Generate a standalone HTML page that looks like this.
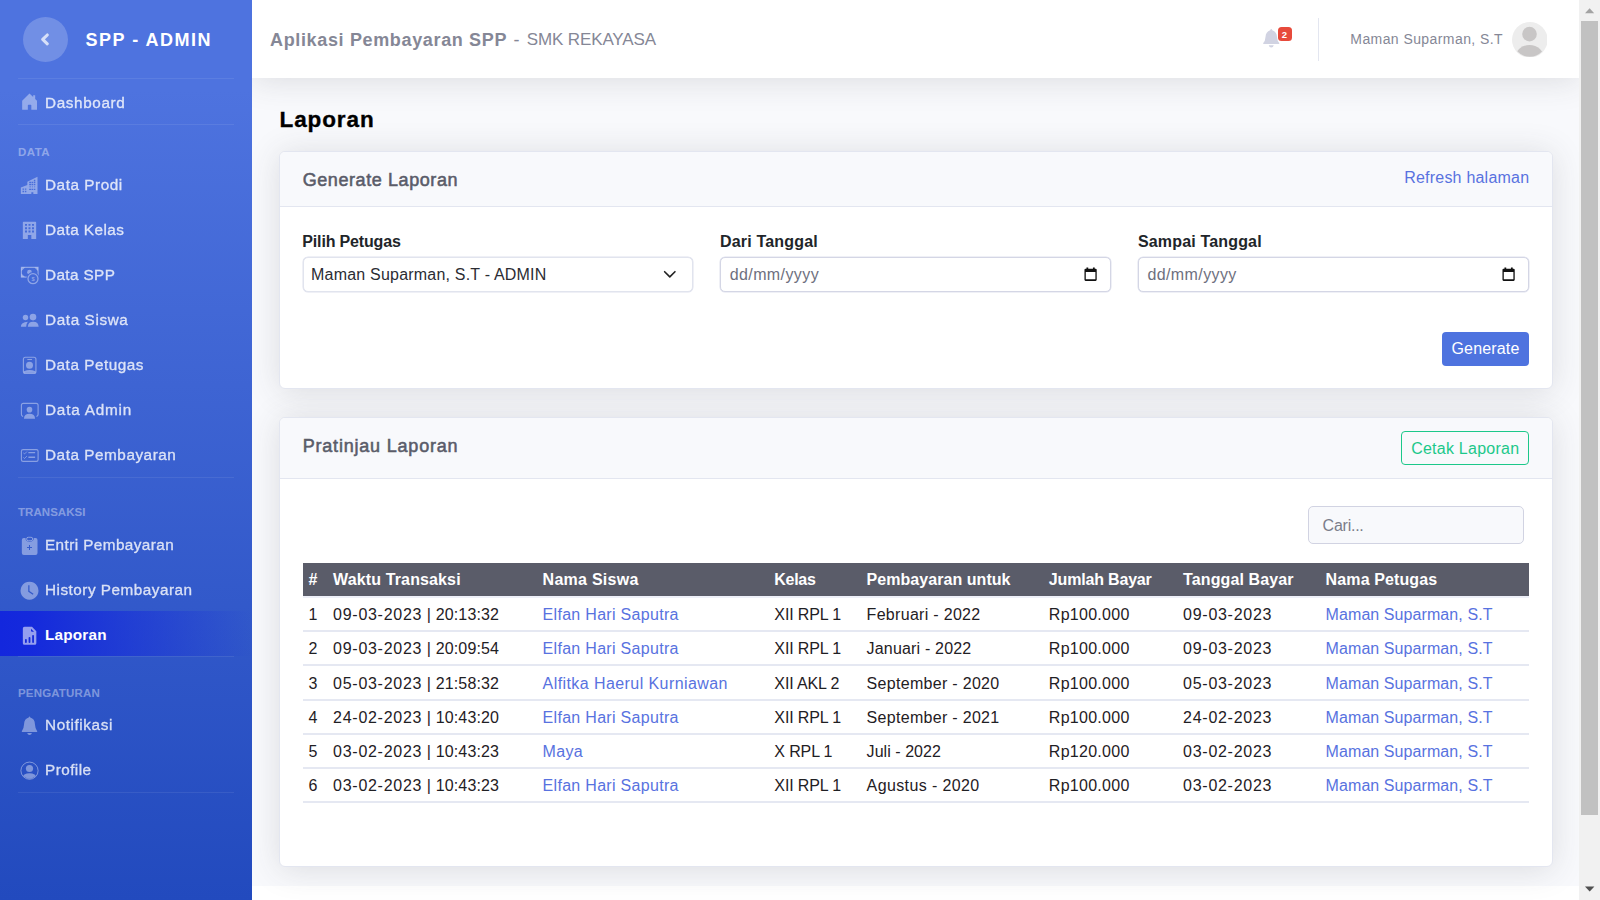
<!DOCTYPE html>
<html lang="id">
<head>
<meta charset="utf-8">
<title>Laporan - Aplikasi Pembayaran SPP</title>
<style>
*{box-sizing:border-box}
html,body{margin:0;padding:0}
body{width:1600px;height:900px;overflow:hidden;position:relative;background:#f8f9fc;
  font-family:"Liberation Sans",sans-serif;font-size:16px;color:#212529;-webkit-font-smoothing:antialiased}
a{text-decoration:none;color:#5872e0}
ul{list-style:none;margin:0;padding:0}

/* ---------- sidebar ---------- */
#sidebar{position:absolute;left:0;top:0;width:252px;height:900px;
  background:linear-gradient(180deg,#4e73df 10%,#224abe 100%)}
.brand{position:absolute;left:0;top:0;width:252px;height:78px}
.brand .circle{position:absolute;left:23px;top:16.7px;width:45px;height:45px;border-radius:50%;background:rgba(255,255,255,.2)}
.brand .circle svg{position:absolute;left:15px;top:15px;width:15px;height:15px}
.brand .name{position:absolute;left:85.5px;top:29px;line-height:22px;font-size:18px;font-weight:700;color:#fff;letter-spacing:1.5px;white-space:nowrap}
.sdiv{position:absolute;left:18px;width:216px;height:1px;background:rgba(255,255,255,.08)}
.shead{position:absolute;left:18px;font-size:11.5px;font-weight:700;color:rgba(255,255,255,.4);line-height:14px;white-space:nowrap;letter-spacing:.05px}
.nav{position:absolute;left:0;width:252px;height:45px}
.nav svg{position:absolute;left:14px;top:7.5px;width:40px;height:30px;fill:rgba(255,255,255,.4)}
.nav span{position:absolute;left:45px;top:12px;line-height:20px;font-size:15.3px;color:#fff;opacity:.82;-webkit-text-stroke:.3px #fff;white-space:nowrap;letter-spacing:.45px}
.nav.active::before{content:"";position:absolute;left:0;top:-1.5px;width:252px;height:45px;background:linear-gradient(90deg,#1327dd 0%,rgba(19,39,221,.95) 12%,rgba(19,39,221,0) 100%)}
.nav.active svg{fill:rgba(255,255,255,.55)}
.nav.active span{color:#fff;opacity:1;-webkit-text-stroke:0;font-weight:700;letter-spacing:.1px}

/* ---------- topbar ---------- */
#topbar{position:absolute;left:252px;top:0;width:1327px;height:78.3px;background:#fff;
  box-shadow:0 2.7px 31.5px 0 rgba(58,59,69,.15)}
#topbar .title{position:absolute;left:18px;top:27.8px;line-height:24px;font-size:18px;color:#858796;white-space:nowrap}
#topbar .title b{font-weight:700;letter-spacing:.65px}
#topbar .title .dash{position:absolute;left:243.5px;top:0;font-weight:400;letter-spacing:0}
#topbar .title .sub{position:absolute;left:256.8px;top:0;font-size:17px;letter-spacing:-.13px}
#topbar .vdiv{position:absolute;left:1066px;top:18px;width:1px;height:42.75px;background:#e3e6f0}
#topbar .user{position:absolute;left:1098.3px;top:29.2px;line-height:20px;font-size:14px;color:#858796;white-space:nowrap;letter-spacing:.42px}
#topbar .avatar{position:absolute;left:1259.8px;top:21.8px;width:35.6px;height:35.6px}
#topbar .bell{position:absolute;left:1009px;top:27px;width:20px;height:22px}
#topbar .badge{position:absolute;left:1025.5px;top:26.5px;width:14px;height:14px;border-radius:3.5px;background:#e74a3b;color:#fff;font-size:9.5px;font-weight:700;line-height:15px;text-align:center}

/* ---------- scrollbar ---------- */
#sb{position:absolute;left:1579px;top:0;width:21px;height:900px;background:#f1f1f1}
#sb .thumb{position:absolute;left:2px;top:21px;width:17px;height:794px;background:#c1c1c1}
#sb svg{position:absolute;left:0;width:21px;height:21px}

/* ---------- content ---------- */
#content{position:absolute;left:252px;top:78.75px;width:1327px;height:821.25px;overflow:hidden}
h1.page{position:absolute;left:279.5px;top:103.7px;-webkit-text-stroke:.35px #000;margin:0;line-height:32px;font-size:22.5px;font-weight:700;color:#000;white-space:nowrap;letter-spacing:.9px}
.card{position:absolute;left:279px;width:1274px;background:#fff;border:1px solid #e3e6f0;border-radius:6px;
  box-shadow:0 2.7px 31.5px 0 rgba(58,59,69,.15)}
.card .hd{position:absolute;left:0;top:0;right:0;background:#f8f9fc;border-bottom:1px solid #e3e6f0;border-radius:5px 5px 0 0}
.card .hd h6{position:absolute;left:22.7px;margin:0;font-size:18px;font-weight:400;color:#5a5c69;-webkit-text-stroke:.55px #5a5c69;line-height:27px;white-space:nowrap}

.hlink{position:absolute;right:22.7px;top:16px;line-height:20px;font-size:16px;color:#5872e0;white-space:nowrap;letter-spacing:.22px}
.lbl{position:absolute;top:80px;line-height:20px;font-size:16px;font-weight:700;color:#212529;white-space:nowrap}
.inp{position:absolute;top:104.5px;width:390.7px;height:35px;border:1px solid #d4d6e5;border-radius:5px;background:#fff;box-shadow:0 0 0 .5px #dfe1ee}
.inp .val,.inp .ph{position:absolute;left:7.4px;top:7.3px;line-height:20px;font-size:16px;white-space:nowrap}
.inp .val{color:#2b2c33;letter-spacing:.2px}
.inp .ph{color:#6e707e;letter-spacing:.4px;left:8.4px}
.inp .chev{position:absolute;left:358.4px;top:12.7px;width:15.6px;height:8.6px}
.inp .cal{position:absolute;left:362.6px;top:9.5px;width:13.2px;height:14.2px}
.btn-primary{position:absolute;left:1162px;top:179.75px;width:87px;height:34.2px;border-radius:4px;background:#4e73df;color:#fff;font-size:16px;line-height:34px;text-align:center;white-space:nowrap;letter-spacing:.16px}
.btn-outline{position:absolute;left:1121.4px;top:12.6px;width:127.7px;height:34.2px;border:1.2px solid #1cc88a;border-radius:4px;color:#1cc88a;font-size:16px;line-height:34.2px;text-align:center;white-space:nowrap;background:transparent;letter-spacing:.24px}
.search{position:absolute;left:1028.2px;top:88.2px;width:215.7px;height:37.6px;border:1px solid #d1d3e2;border-radius:5px;background:#f8f9fc}
.search span{position:absolute;left:13.4px;top:8.4px;line-height:20px;font-size:16px;color:#7b7d8a;white-space:nowrap;letter-spacing:-.24px}
.tbl{position:absolute;left:22.6px;top:145.2px;width:1226.4px;border-collapse:separate;border-spacing:0;table-layout:fixed;font-size:16px}
.tbl th{height:34.6px;padding:1.6px 0 0 6px;border-bottom:2px solid #eef0f8;background:#5a5c69;background-clip:padding-box;color:#fff;font-weight:700;text-align:left;white-space:nowrap;line-height:20px}
.tbl td{height:34.27px;padding:1.5px 0 0 6px;border-bottom:2px solid #e5e8f2;color:#1f2024;white-space:nowrap;line-height:20px}
.tbl a{color:#5872e0}
.tbl tr:nth-child(3) td,.tbl tr:nth-child(4) td{padding-top:2.6px}
.tbl td.d{letter-spacing:.72px}
.tbl td.d i{font-style:normal;letter-spacing:.15px}
.tbl td.n{letter-spacing:.3px}
.tbl td.k{letter-spacing:-.14px}
.tbl td.p{letter-spacing:.3px}
.tbl td.j{letter-spacing:.27px}
.tbl td.o{letter-spacing:.08px}
#footer{position:absolute;left:252px;top:886px;width:1327px;height:20px;background:#fff}
</style>
</head>
<body>

<div id="content"></div>
<div id="footer"></div>

<h1 class="page">Laporan</h1>

<section class="card" id="card1" style="top:151px;height:238px">
  <div class="hd" style="height:55px">
    <h6 style="top:14.5px;letter-spacing:.58px">Generate Laporan</h6>
    <a class="hlink" href="#">Refresh halaman</a>
  </div>
  <label class="lbl" style="left:22.3px;letter-spacing:-.16px">Pilih Petugas</label>
  <label class="lbl" style="left:439.9px;letter-spacing:.19px">Dari Tanggal</label>
  <label class="lbl" style="left:857.9px;letter-spacing:.17px">Sampai Tanggal</label>
  <div class="inp" style="left:22.7px;border-color:#e1e4ee"><span class="val">Maman Suparman, S.T - ADMIN</span>
    <svg class="chev" viewBox="0 0 16 10"><path d="M2 2 L8 8 L14 2" fill="none" stroke="#222" stroke-width="1.9" stroke-linecap="round" stroke-linejoin="round"/></svg></div>
  <div class="inp" style="left:440.3px"><span class="ph">dd/mm/yyyy</span>
    <svg class="cal" viewBox="0 0 14 15"><path fill-rule="evenodd" fill="#111" d="M2.6 0.4 h1.9 v1.4 h5 v-1.4 h1.9 v1.4 h0.9 q1.2 0 1.2 1.2 v10.6 q0 1.2 -1.2 1.2 h-10.6 q-1.2 0 -1.2 -1.2 v-10.6 q0 -1.2 1.2 -1.2 h0.9 z M1.9 5.2 v7.9 h10.2 v-7.9 z"/></svg></div>
  <div class="inp" style="left:858px"><span class="ph">dd/mm/yyyy</span>
    <svg class="cal" viewBox="0 0 14 15"><path fill-rule="evenodd" fill="#111" d="M2.6 0.4 h1.9 v1.4 h5 v-1.4 h1.9 v1.4 h0.9 q1.2 0 1.2 1.2 v10.6 q0 1.2 -1.2 1.2 h-10.6 q-1.2 0 -1.2 -1.2 v-10.6 q0 -1.2 1.2 -1.2 h0.9 z M1.9 5.2 v7.9 h10.2 v-7.9 z"/></svg></div>
  <a class="btn-primary" href="#">Generate</a>
</section>

<section class="card" id="card2" style="top:417px;height:450px">
  <div class="hd" style="height:61px">
    <h6 style="top:15px;letter-spacing:.8px">Pratinjau Laporan</h6>
    <a class="btn-outline" href="#">Cetak Laporan</a>
  </div>
  <div class="search"><span>Cari...</span></div>
  <table class="tbl">
    <colgroup><col style="width:24.5px"><col style="width:209.5px"><col style="width:231.75px"><col style="width:92.25px"><col style="width:182.25px"><col style="width:134.25px"><col style="width:142.5px"><col style="width:209.5px"></colgroup>
    <thead><tr><th>#</th><th style="letter-spacing:0.13px">Waktu Transaksi</th><th style="letter-spacing:0.26px">Nama Siswa</th><th style="letter-spacing:-0.3px">Kelas</th><th style="letter-spacing:0.05px">Pembayaran untuk</th><th style="letter-spacing:-0.18px">Jumlah Bayar</th><th style="letter-spacing:0.1px">Tanggal Bayar</th><th style="letter-spacing:0.12px">Nama Petugas</th></tr></thead>
    <tbody>
      <tr><td>1</td><td class="d">09-03-2023<i> | 20:13:32</i></td><td class="n"><a href="#">Elfan Hari Saputra</a></td><td class="k">XII RPL 1</td><td class="p">Februari - 2022</td><td class="j">Rp100.000</td><td class="d">09-03-2023</td><td class="o"><a href="#">Maman Suparman, S.T</a></td></tr>
      <tr><td>2</td><td class="d">09-03-2023<i> | 20:09:54</i></td><td class="n"><a href="#">Elfan Hari Saputra</a></td><td class="k">XII RPL 1</td><td class="p" style="letter-spacing:.18px">Januari - 2022</td><td class="j">Rp100.000</td><td class="d">09-03-2023</td><td class="o"><a href="#">Maman Suparman, S.T</a></td></tr>
      <tr><td>3</td><td class="d">05-03-2023<i> | 21:58:32</i></td><td class="n"><a href="#" style="letter-spacing:.42px">Alfitka Haerul Kurniawan</a></td><td class="k">XII AKL 2</td><td class="p">September - 2020</td><td class="j">Rp100.000</td><td class="d">05-03-2023</td><td class="o"><a href="#">Maman Suparman, S.T</a></td></tr>
      <tr><td>4</td><td class="d">24-02-2023<i> | 10:43:20</i></td><td class="n"><a href="#">Elfan Hari Saputra</a></td><td class="k">XII RPL 1</td><td class="p">September - 2021</td><td class="j">Rp100.000</td><td class="d">24-02-2023</td><td class="o"><a href="#">Maman Suparman, S.T</a></td></tr>
      <tr><td>5</td><td class="d">03-02-2023<i> | 10:43:23</i></td><td class="n"><a href="#">Maya</a></td><td class="k">X RPL 1</td><td class="p" style="letter-spacing:.05px">Juli - 2022</td><td class="j">Rp120.000</td><td class="d">03-02-2023</td><td class="o"><a href="#">Maman Suparman, S.T</a></td></tr>
      <tr><td>6</td><td class="d">03-02-2023<i> | 10:43:23</i></td><td class="n"><a href="#">Elfan Hari Saputra</a></td><td class="k">XII RPL 1</td><td class="p" style="letter-spacing:.38px">Agustus - 2020</td><td class="j">Rp100.000</td><td class="d">03-02-2023</td><td class="o"><a href="#">Maman Suparman, S.T</a></td></tr>
    </tbody>
  </table>
</section>



<header id="topbar">
  <div class="title"><b>Aplikasi Pembayaran SPP</b><span class="dash">-</span><span class="sub">SMK REKAYASA</span></div>
  <svg class="bell" viewBox="0 0 1200 900" style="left:998px;top:15px;width:60px;height:45px"><path fill="#d1d3e2" d="M425 280 Q440 280 446 305 Q535 335 540 440 Q545 520 585 560 V580 H265 V560 Q305 520 310 440 Q315 335 404 305 Q410 280 425 280 Z M375 605 H475 Q465 650 425 650 Q385 650 375 605 Z"/></svg>
  <div class="badge">2</div>
  <div class="vdiv"></div>
  <div class="user">Maman Suparman, S.T</div>
  <svg class="avatar" viewBox="0 0 36 36"><defs><clipPath id="cpa"><circle cx="18" cy="18" r="17.2"/></clipPath></defs><circle cx="18" cy="18" r="18" fill="#ededed"/><circle cx="17.7" cy="12.2" r="7.4" fill="#c8c6c6"/><ellipse cx="17.7" cy="37.2" rx="15" ry="14" fill="#c8c6c6" clip-path="url(#cpa)"/></svg>
</header>

<nav id="sidebar">
  <div class="brand">
    <div class="circle"><svg viewBox="0 0 15 15"><path d="M9.3 3 L4.7 7.4 L9.3 11.8" fill="none" stroke="rgba(255,255,255,.72)" stroke-width="3.1" stroke-linecap="round" stroke-linejoin="round"/></svg></div>
    <div class="name">SPP - ADMIN</div>
  </div>
  <div class="sdiv" style="top:78px"></div>

  <a class="nav" style="top:80.5px" href="#"><svg viewBox="0 0 1200 900"><path d="M465 165 L245 385 V655 H415 V525 Q415 505 435 505 H500 Q520 505 520 525 V655 H690 V385 L635 330 V215 H575 V272 Z"/></svg><span style="letter-spacing:0.62px">Dashboard</span></a>
  <div class="sdiv" style="top:124px"></div>

  <div class="shead" style="top:145px;letter-spacing:.45px">DATA</div>
  <a class="nav" style="top:162.5px" href="#"><svg viewBox="0 0 1200 900"><path fill-rule="evenodd" d="M205 720 V525 L400 450 V350 L705 205 V720 H580 V665 H520 V720 Z M455 355 h60 v40 h-60z M530 355 h45 v40 h-45z M595 355 h45 v40 h-45z M595 295 h45 v40 h-45z M455 420 h60 v40 h-60z M530 420 h45 v40 h-45z M595 420 h45 v40 h-45z M460 492 h50 v22 h-50z M535 492 h36 v22 h-36z M600 492 h36 v22 h-36z M455 560 h60 v40 h-60z M530 560 h45 v40 h-45z M595 560 h45 v40 h-45z M255 555 h45 v40 h-45z M325 555 h45 v40 h-45z M255 625 h45 v40 h-45z M325 625 h45 v40 h-45z"/></svg><span style="letter-spacing:0.54px">Data Prodi</span></a>
  <a class="nav" style="top:207.5px" href="#"><svg viewBox="0 0 1200 900"><path fill-rule="evenodd" d="M285 205 H645 Q665 205 665 225 V720 H520 V600 H415 V720 H265 V225 Q265 205 285 205 Z M330 268 h60 v58 h-60z M435 268 h60 v58 h-60z M540 268 h60 v58 h-60z M330 366 h60 v58 h-60z M435 366 h60 v58 h-60z M540 366 h60 v58 h-60z M330 464 h60 v58 h-60z M435 464 h60 v58 h-60z M540 464 h60 v58 h-60z"/></svg><span>Data Kelas</span></a>
  <a class="nav" style="top:252.5px" href="#"><svg viewBox="0 0 1200 900"><defs><mask id="mk1"><rect width="1200" height="900" fill="#fff"/><circle cx="570" cy="560" r="200" fill="#000"/></mask></defs><g mask="url(#mk1)"><path fill-rule="evenodd" d="M205 205 H740 V530 H205 Z M240 240 V495 H705 V240 Z"/><path d="M225 225 H330 L225 330 Z M720 225 H615 L720 330 Z M225 510 H330 L225 405 Z"/><circle cx="465" cy="365" r="70"/></g><circle cx="570" cy="560" r="150" fill="none" stroke="rgba(255,255,255,.4)" stroke-width="38"/><text x="570" y="625" text-anchor="middle" font-family="Liberation Sans, sans-serif" font-weight="700" font-size="170">$</text></svg><span style="letter-spacing:0.39px">Data SPP</span></a>
  <a class="nav" style="top:297.5px" href="#"><svg viewBox="0 0 1200 900"><circle cx="345" cy="378" r="82"/><circle cx="570" cy="362" r="100"/><path d="M205 655 Q205 510 415 503 Q368 560 365 655 Z"/><path d="M415 655 Q418 500 577 500 Q736 500 740 655 Z"/></svg><span style="letter-spacing:0.61px">Data Siswa</span></a>
  <a class="nav" style="top:342.5px" href="#"><svg viewBox="0 0 1200 900"><rect x="282" y="218" width="376" height="485" rx="60" fill="none" stroke="rgba(255,255,255,.4)" stroke-width="34"/><rect x="395" y="272" width="150" height="26" rx="13"/><circle cx="465" cy="460" r="105"/><path d="M299 640 Q465 560 641 640 V686 H299 Z"/></svg><span style="letter-spacing:0.53px">Data Petugas</span></a>
  <a class="nav" style="top:387.5px" href="#"><svg viewBox="0 0 1200 900"><path d="M258 640 Q222 620 222 575 V310 Q222 252 280 252 H665 Q723 252 723 310 V575 Q723 620 687 640" fill="none" stroke="rgba(255,255,255,.4)" stroke-width="34" stroke-linecap="round"/><circle cx="465" cy="440" r="84"/><path d="M298 715 Q302 565 465 565 Q628 565 632 715 Z"/></svg><span style="letter-spacing:0.79px">Data Admin</span></a>
  <a class="nav" style="top:432.5px" href="#"><svg viewBox="0 0 1200 900"><rect x="222" y="290" width="501" height="350" rx="50" fill="none" stroke="rgba(255,255,255,.4)" stroke-width="34"/><path d="M290 395 L318 418 L380 355 M290 530 L318 553 L380 490" fill="none" stroke="rgba(255,255,255,.4)" stroke-width="26" stroke-linecap="round" stroke-linejoin="round"/><rect x="430" y="360" width="205" height="38" rx="10"/><rect x="430" y="492" width="205" height="46" rx="10"/></svg><span style="letter-spacing:0.54px">Data Pembayaran</span></a>
  <div class="sdiv" style="top:476.6px"></div>

  <div class="shead" style="top:505px">TRANSAKSI</div>
  <a class="nav" style="top:522.5px" href="#"><svg viewBox="0 0 1200 900"><path fill-rule="evenodd" d="M295 240 H345 Q345 355 470 355 Q595 355 595 240 H645 Q705 240 705 300 V690 Q705 750 645 750 H295 Q235 750 235 690 V300 Q235 240 295 240 Z M450 450 h30 v60 h60 v30 h-60 v60 h-30 v-60 h-60 v-30 h60 z"/><rect x="378" y="218" width="184" height="104" rx="52" fill="none" stroke="rgba(255,255,255,.4)" stroke-width="30"/></svg><span style="letter-spacing:0.42px">Entri Pembayaran</span></a>
  <a class="nav" style="top:567.5px" href="#"><svg viewBox="0 0 1200 900"><path fill-rule="evenodd" d="M465 200 A270 270 0 1 1 464.9 200 Z M427 305 H465 V482 L585 560 L564 592 L427 503 Z"/></svg><span style="letter-spacing:0.5px">History Pembayaran</span></a>
  <a class="nav active" style="top:612.5px" href="#"><svg viewBox="0 0 1200 900"><path fill-rule="evenodd" d="M315 205 H540 L670 340 V695 Q670 745 620 745 H315 Q265 745 265 695 V255 Q265 205 315 205 Z M510 262 V320 Q510 352 545 352 H600 Z M330 595 q0 -22 27 -22 q27 0 27 22 v70 q0 22 -27 22 q-27 0 -27 -22z M438 535 q0 -22 27 -22 q27 0 27 22 v130 q0 22 -27 22 q-27 0 -27 -22z M545 470 q0 -22 27 -22 q27 0 27 22 v195 q0 22 -27 22 q-27 0 -27 -22z"/></svg><span style="letter-spacing:0.2px">Laporan</span></a>
  <div class="sdiv" style="top:656px"></div>

  <div class="shead" style="top:686px;letter-spacing:.16px">PENGATURAN</div>
  <a class="nav" style="top:703px" href="#"><svg style="top:8px" viewBox="0 0 1200 900"><path d="M465 168 Q480 168 488 195 Q625 235 628 400 Q632 520 695 605 V628 H235 V605 Q298 520 302 400 Q305 235 442 195 Q450 168 465 168 Z M395 660 H538 Q520 718 466 718 Q412 718 395 660 Z"/></svg><span style="letter-spacing:0.58px">Notifikasi</span></a>
  <a class="nav" style="top:748px" href="#"><svg style="top:8px" viewBox="0 0 1200 900"><defs><clipPath id="cp1"><circle cx="465" cy="440" r="240"/></clipPath></defs><circle cx="465" cy="440" r="258" fill="none" stroke="rgba(255,255,255,.4)" stroke-width="30"/><circle cx="465" cy="375" r="108"/><ellipse cx="465" cy="660" rx="215" ry="145" clip-path="url(#cp1)"/></svg><span>Profile</span></a>
  <div class="sdiv" style="top:792px"></div>
</nav>


<div id="sb">
  <svg style="top:0" viewBox="0 0 21 21"><path d="M6 13.2 L10.6 8.2 L15.2 13.2 Z" fill="#a3a3a3"/></svg>
  <div class="thumb"></div>
  <svg style="top:879px" viewBox="0 0 21 21"><path d="M6 7.6 L15.4 7.6 L10.7 12.6 Z" fill="#505050"/></svg>
</div>
</body>
</html>
